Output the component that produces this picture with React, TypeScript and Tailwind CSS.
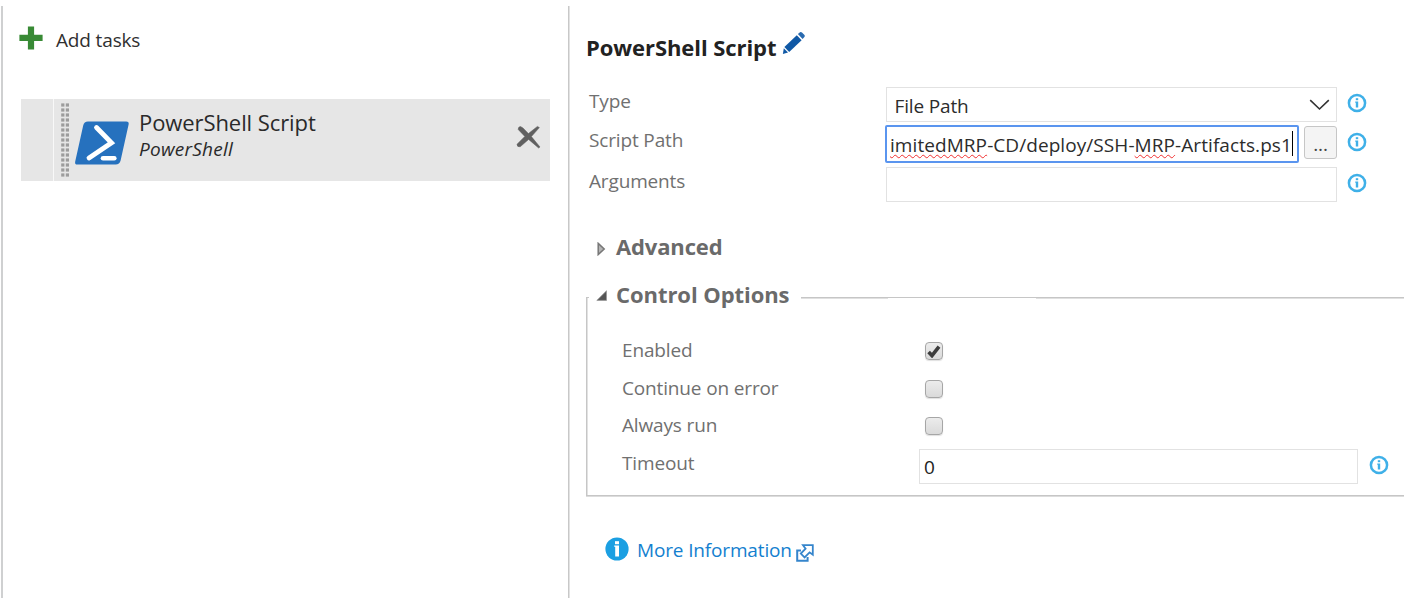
import type { ReactNode } from "react";

function InfoRing() {
  return (
    <svg width="20" height="20" viewBox="0 0 20 20" className="block shrink-0">
      <circle cx="10" cy="10" r="8.1" fill="none" stroke="#3fb0e8" strokeWidth="2.5" />
      <rect x="8.8" y="5.2" width="2.4" height="2" fill="#3fb0e8" />
      <path d="M8.2 8.6H11.2V14.4H8.8V9.8H8.2Z" fill="#3fb0e8" />
    </svg>
  );
}

function Grip() {
  const dots = Array.from({ length: 15 }, (_, i) => i * 5);
  return (
    <svg width="9" height="75" viewBox="0 0 9 75" className="block shrink-0">
      {dots.map((y) => (
        <g key={y} fill="#9c9c9c">
          <rect x="0.2" y={y + 0.4} width="3.2" height="3.2" />
          <rect x="4.8" y={y + 0.4} width="3.2" height="3.2" />
        </g>
      ))}
    </svg>
  );
}

function PowerShellLogo() {
  return (
    <svg width="56" height="46" viewBox="0 0 56 46" className="block shrink-0">
      <path d="M14 1.5H52.2Q55.3 1.5 54.6 4.6L46.6 40.5Q45.6 44.6 41.6 44.6H3.6Q0.5 44.6 1.2 41.4L9.2 5.4Q10.1 1.5 14 1.5Z" fill="#2671be" />
      <path d="M22.5 7.5L37.5 22.8L15 38" fill="none" stroke="#fff" strokeWidth="4.8" strokeLinecap="round" strokeLinejoin="miter" />
      <path d="M29 38.2H40.3" stroke="#fff" strokeWidth="4.6" strokeLinecap="round" />
    </svg>
  );
}

function CheckBox({ checked = false }: { checked?: boolean }) {
  return (
    <span className="flex h-[18px] w-[18px] items-center justify-center rounded-[4px] border-[1.5px] border-[#a6a6a6] bg-linear-to-b from-[#ececec] to-[#dadada] shadow-[0_1px_1px_#e0e0e0]">
      {checked && (
        <svg width="14" height="14" viewBox="0 0 14 14" className="block">
          <path d="M1.6 8L5 11.6L12 2.6" fill="none" stroke="#3c3c3c" strokeWidth="3.6" />
        </svg>
      )}
    </span>
  );
}

function OptionRow({ label, className, children }: { label: string; className: string; children: ReactNode }) {
  return (
    <div className={`flex ${className}`}>
      <span className="w-[303px] shrink-0 leading-[24px]">{label}</span>
      {children}
    </div>
  );
}

function Misspelled({ children }: { children: ReactNode }) {
  return (
    <span className="underline decoration-[#f03030] decoration-wavy decoration-[1px] underline-offset-[2px] [text-decoration-skip-ink:none]">
      {children}
    </span>
  );
}

export default function App() {
  return (
    <div className="flex h-[598px] w-[1404px] overflow-hidden bg-white pt-[6px] pl-[1px] font-['Open_Sans',sans-serif] text-[19px] font-[370] tracking-[-0.15px] whitespace-nowrap text-[#707070]">
      <section className="w-[567px] shrink-0 border-l-2 border-[#cfd0d1]">
        <div className="flex pt-[20px] pl-[16px]">
          <svg width="24" height="24" viewBox="0 0 24 24" className="block">
            <path d="M8.9 0.4H15.1V8.8H23.6V15.1H15.1V23.5H8.9V15.1H0.4V8.8H8.9Z" fill="#388a35" />
          </svg>
          <span className="mt-[2px] ml-[13px] leading-[24px] text-[#303030]">Add tasks</span>
        </div>
        <div className="mt-[47px] ml-[18px] flex h-[82px] w-[529px] bg-[#e6e6e6]">
          <div className="w-[33px] shrink-0 border-r border-[#f8f8f8]" />
          <div className="mt-[4px] ml-[7px]">
            <Grip />
          </div>
          <div className="mt-[21px] ml-[4px]">
            <PowerShellLogo />
          </div>
          <div className="ml-[9px] grow text-[#2a2a2a]">
            <div className="mt-[9px] text-[22px] leading-[28px] tracking-[-0.08px]">PowerShell Script</div>
            <div className="mt-px leading-[24px] tracking-[0.25px] italic">PowerShell</div>
          </div>
          <svg width="25" height="24" viewBox="0 0 25 24" className="mt-[26px] mr-[9px] block shrink-0">
            <path d="M4.5 1.5Q2 1.8 2.2 4.5L8.8 11.4L1 19.2Q1 22.2 4.2 21.8L12.6 14.4L22.6 23L24 22L15.4 11.6L23.4 2.6L21.4 1.4L12.4 8.6L7 3Z" fill="#606060" stroke="#606060" strokeWidth="0.5" />
          </svg>
        </div>
      </section>

      <section className="flex w-[836px] shrink-0 flex-col border-l border-[#c8c8c8] pl-[17px] shadow-[inset_1px_0_#e2e2e2]">
        <div className="mt-[27px] flex h-[28px] text-[#222]">
          <h1 className="w-[196px] text-[22px] leading-[28px] font-bold tracking-[-0.07px]">PowerShell Script</h1>
          <svg width="24" height="24" viewBox="0 0 24 24" className="-mt-[2px] block">
            <path d="M2.4 16L14.8 4.2L19.6 9.2L7.2 21Z" fill="#0f58a5" />
            <path d="M1.8 17.2L6 21.4L0.9 22.9Z" fill="#0f58a5" />
            <path d="M15.9 3.1L18 1.3Q19 0.5 20 1.5L22.5 4.1Q23.3 5.1 22.4 6L20.6 8Z" fill="#2a6bb0" />
          </svg>
        </div>

        <div className="mt-[26px] ml-[3px] flex h-[35px]">
          <span className="mt-[2px] w-[297px] shrink-0 leading-[24px]">Type</span>
          <div className="flex h-[35px] w-[451px] justify-between border border-[#e2e2e2] pr-[6px] pl-[7px] text-[#2c2c2c]">
            <span className="mt-[6px] ml-[0.5px] leading-[24px]">File Path</span>
            <svg width="21" height="12" viewBox="0 0 21 12" className="mt-[11px] block">
              <path d="M1.2 1.2L10.5 10L19.8 1.2" fill="none" stroke="#333" strokeWidth="1.6" />
            </svg>
          </div>
          <div className="mt-[6px] ml-[10px]"><InfoRing /></div>
        </div>

        <div className="mt-[3px] ml-[3px] flex h-[38px]">
          <span className="mt-[3px] w-[296px] shrink-0 leading-[24px]">Script Path</span>
          <div className="flex h-[38px] w-[414px] rounded-[2px] border-2 border-[#5a95ef] pl-[3px] text-[#2c2c2c]">
            <span className="mt-[6px] leading-[24px] tracking-[0.07px]">
              <Misspelled>imitedMRP</Misspelled>-CD/deploy/SSH-<Misspelled>MRP</Misspelled>-Artifacts.ps1
            </span>
            <span className="mt-[4px] h-[25px] w-[1.5px] bg-black" />
          </div>
          <button className="mt-[1px] ml-[5px] h-[33px] w-[33px] rounded-[3px] border border-[#c6c6c6] bg-[#f4f4f4] text-center leading-[34px] text-[#444]">...</button>
          <div className="mt-[7px] ml-[10px]"><InfoRing /></div>
        </div>

        <div className="mt-[4px] ml-[3px] flex h-[35px]">
          <span className="mt-[2px] w-[297px] shrink-0 leading-[24px]">Arguments</span>
          <div className="h-[35px] w-[451px] border border-[#e2e2e2]" />
          <div className="mt-[6px] ml-[10px]"><InfoRing /></div>
        </div>

        <div className="mt-[30px] flex h-[28px] pl-[11px]">
          <svg width="9" height="14" viewBox="0 0 9 14" className="mt-[10px] block">
            <path d="M1.2 1.4L7.2 7L1.2 12.6Z" fill="#b4b4b4" stroke="#777" strokeWidth="1.5" />
          </svg>
          <h2 className="ml-[10px] text-[22px] leading-[28px] font-bold tracking-[-0.14px] text-[#6a6a6a]">Advanced</h2>
        </div>

        <div className="mt-[37px] h-[199px] border-y border-l border-[#c6c6c6] shadow-[inset_1px_0_#e2e2e2,0_1px_#dcdcdc]">
          <div className="-mt-px flex h-[2px] w-full">
            <div className="-mt-[17px] ml-[2px] flex h-[28px] w-[212px] shrink-0 bg-white pl-[7px]">
              <svg width="12" height="12" viewBox="0 0 12 12" className="mt-[10px] block">
                <path d="M10.5 0.8V10.4H0.8Z" fill="#555" stroke="#999" strokeWidth="0.8" />
              </svg>
              <h2 className="ml-[8px] text-[22px] leading-[28px] font-bold tracking-[-0.06px] text-[#6a6a6a]">Control Options</h2>
            </div>
            <div className="h-[2px] w-[87px] border-b border-[#e0e0e0]" />
            <div className="ml-[148px] h-[2px] grow border-b border-[#e0e0e0]" />
          </div>
          <div className="pt-[39px] pl-[35px]">
            <OptionRow label="Enabled" className="h-[38px]">
              <div className="mt-[4px]"><CheckBox checked /></div>
            </OptionRow>
            <OptionRow label="Continue on error" className="h-[37px]">
              <div className="mt-[4px]"><CheckBox /></div>
            </OptionRow>
            <OptionRow label="Always run" className="h-[38px]">
              <div className="mt-[4px]"><CheckBox /></div>
            </OptionRow>
            <OptionRow label="Timeout" className="h-[38px]">
              <div className="-mt-[2px] -ml-[6px] h-[35px] w-[439px] border border-[#e2e2e2] pt-[5px] pl-[4px] leading-[24px] text-[#222]">0</div>
              <div className="mt-[4px] ml-[11px]"><InfoRing /></div>
            </OptionRow>
          </div>
        </div>

        <div className="mt-[41px] flex h-[24px] pl-[19px] text-[#1380cf]">
          <svg width="24" height="24" viewBox="0 0 24 24" className="block">
            <circle cx="12" cy="12" r="11.6" fill="#1b9fe2" />
            <rect x="10" y="4.2" width="4" height="3" fill="#fff" />
            <path d="M9.2 8.6H14V19.4H10.2V9.8H9.2Z" fill="#fff" />
          </svg>
          <span className="ml-[8px] w-[159px] leading-[26px]">More Information</span>
          <svg width="18" height="18" viewBox="0 0 18 18" className="mt-[7px] block" fill="none" stroke="#3585cc" strokeWidth="2">
            <path d="M5 6.6H1.2V16.8H11.6V13" />
            <path d="M7 1.2H16.8V10.8L13.6 8.4L8.6 13.4L4.8 9.6L9.6 4.6Z" fill="#fff" strokeWidth="1.8" />
          </svg>
        </div>
      </section>
    </div>
  );
}
